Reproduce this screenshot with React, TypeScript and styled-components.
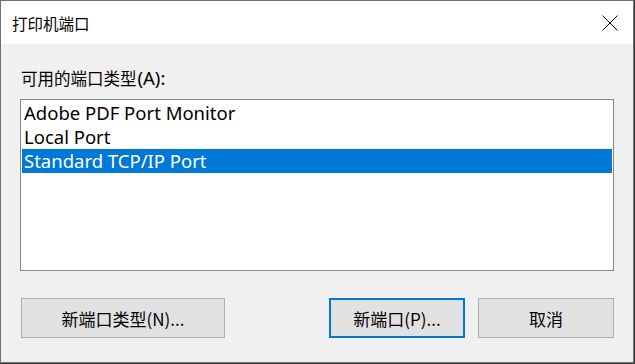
import { ReactElement } from 'react';
import styled, { createGlobalStyle } from 'styled-components';

const GlobalStyle = createGlobalStyle`
  html, body {
    margin: 0;
    padding: 0;
    background: #3a3a3a;
  }
  body {
    font-family: "Noto Sans", "Noto Sans CJK SC", sans-serif;
  }
`;

const ports = ['Adobe PDF Port Monitor', 'Local Port', 'Standard TCP/IP Port'];

const App = (): ReactElement => (
  <>
    <GlobalStyle />
    <Window>
      <TitleBar>
        <Title>打印机端口</Title>
        <CloseButton aria-label="关闭">
          <svg width="16" height="16" viewBox="0 0 16 16">
            <path d="M0.5 0.5 L15.5 15.5 M15.5 0.5 L0.5 15.5" stroke="#000" strokeWidth="1" fill="none" />
          </svg>
        </CloseButton>
      </TitleBar>
      <Body>
        <Label>
          可用的端口类型<Mnemonic>(A):</Mnemonic>
        </Label>
        <ListBox>
          {ports.map((p, i) => (
            <ListItem key={p} selected={i === 2}>{p}</ListItem>
          ))}
        </ListBox>
        <ButtonRow>
          <Button width={204}>新端口类型(N)...</Button>
          <Spacer />
          <Button width={136} primary>新端口(P)...</Button>
          <Button width={136}>取消</Button>
        </ButtonRow>
      </Body>
    </Window>
  </>
);

const Window = styled.div`
  width: 634px;
  height: 363px;
  box-sizing: border-box;
  border: 1px solid #6f6f6f;
  background: #f0f0f0;
  display: flex;
  flex-direction: column;
`;

const TitleBar = styled.div`
  height: 43px;
  background: #ffffff;
  display: flex;
  align-items: center;
  justify-content: space-between;
  padding: 0 15px 0 11px;
`;

const Title = styled.div`
  font-size: 15.5px;
  color: #000;
  font-family: "Noto Sans CJK SC", sans-serif;
`;

const CloseButton = styled.div`
  width: 16px;
  height: 16px;
  display: flex;
`;

const Body = styled.div`
  flex: 1;
  display: flex;
  flex-direction: column;
  padding: 0 19px 0 19px;
`;

const Label = styled.div`
  font-size: 16.5px;
  line-height: 22px;
  margin-top: 23px;
  padding-left: 1px;
  color: #000;
  font-family: "Noto Sans CJK SC", sans-serif;
`;

const Mnemonic = styled.span`
  font-family: "Noto Sans", sans-serif;
  font-size: 18.5px;
  margin-left: 1px;
`;

const ListBox = styled.div`
  margin-top: 10px;
  height: 172px;
  box-sizing: border-box;
  border: 1px solid #828790;
  background: #fff;
  padding: 1px;
  display: flex;
  flex-direction: column;
`;

const ListItem = styled.div<{ selected?: boolean }>`
  height: 24px;
  line-height: 24px;
  font-size: 18.5px;
  padding-left: 2px;
  color: ${p => (p.selected ? '#fff' : '#000')};
  background: ${p => (p.selected ? '#0078d7' : 'transparent')};
  white-space: nowrap;
`;

const ButtonRow = styled.div`
  margin-top: 27px;
  display: flex;
  gap: 13px;
  padding-left: 1px;
`;

const Spacer = styled.div`
  flex: 1;
`;

const Button = styled.div<{ width: number; primary?: boolean }>`
  width: ${p => p.width}px;
  height: 40px;
  box-sizing: border-box;
  background: #e1e1e1;
  border: ${p => (p.primary ? '2px solid #0078d7' : '1px solid #adadad')};
  display: flex;
  align-items: center;
  justify-content: center;
  font-size: 17px;
  color: #000;
  font-family: "Noto Sans CJK SC", sans-serif;
`;

export default App;
